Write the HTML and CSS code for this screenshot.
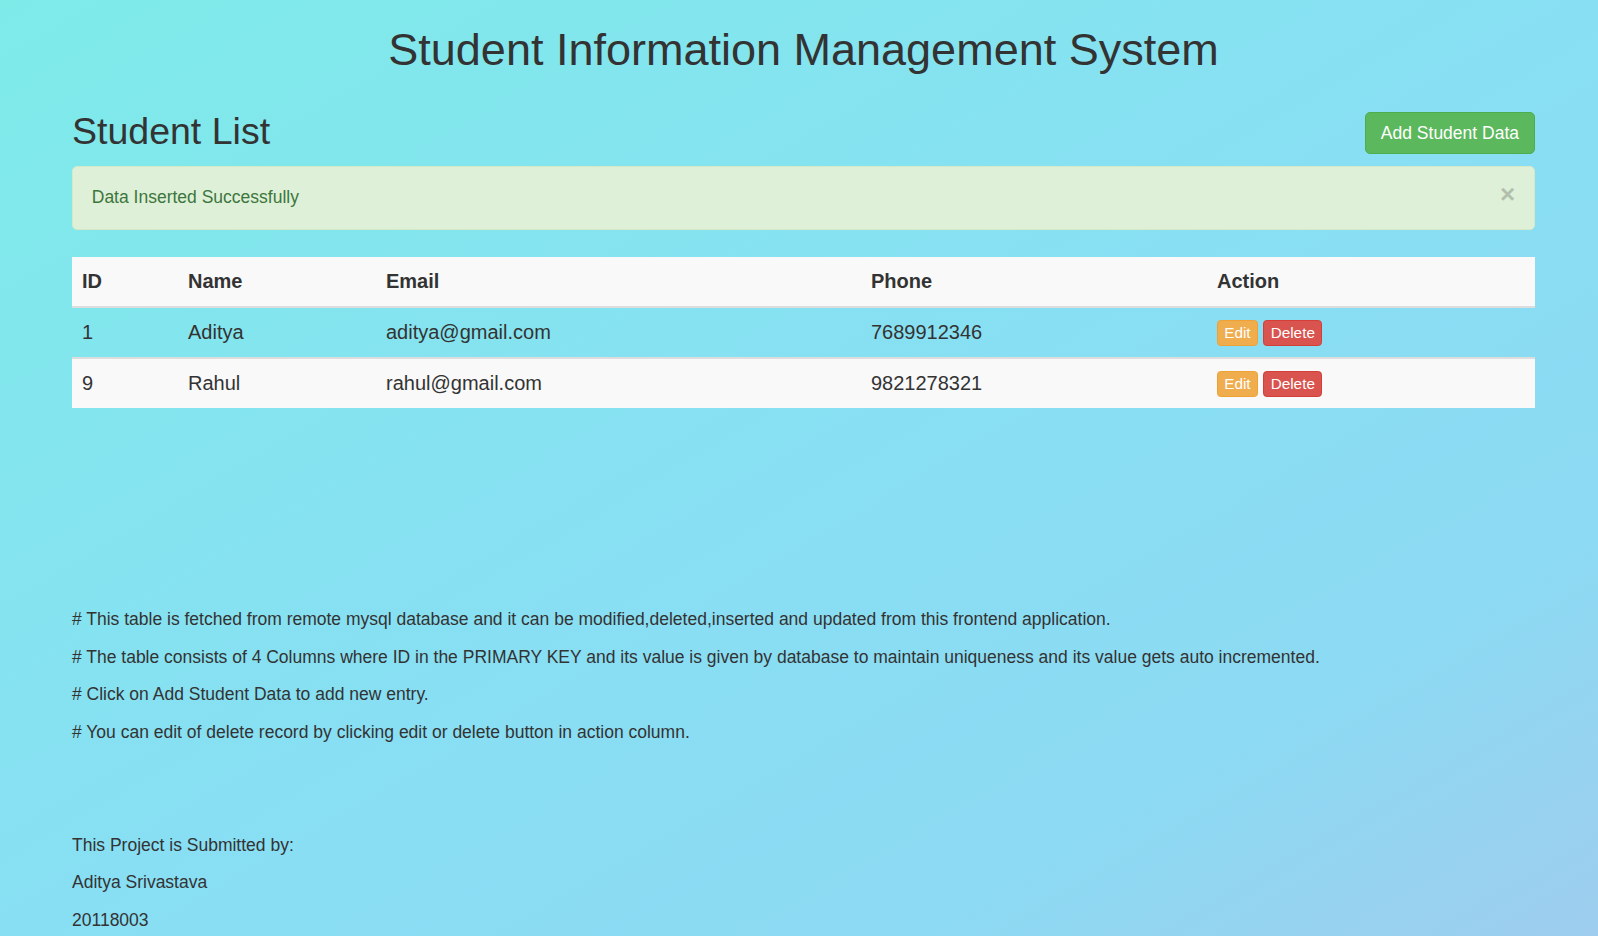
FILE: index.html
```html
<!DOCTYPE html>
<html lang="en">
<head>
<meta charset="utf-8">
<title>Student Information Management System</title>
<link rel="stylesheet" href="styles.css">
</head>
<body>
<div class="container">
  <h1 class="title">Student Information Management System</h1>

  <div class="list-head">
    <h2 class="list-title">Student List</h2>
    <a class="btn btn-success" href="#">Add Student Data</a>
  </div>

  <div class="alert alert-success">
    <span>Data Inserted Successfully</span>
    <span class="close">&times;</span>
  </div>

  <table class="students">
    <thead>
      <tr>
        <th class="col-id">ID</th>
        <th class="col-name">Name</th>
        <th class="col-email">Email</th>
        <th class="col-phone">Phone</th>
        <th class="col-action">Action</th>
      </tr>
    </thead>
    <tbody>
      <tr class="row-plain">
        <td>1</td>
        <td>Aditya</td>
        <td>aditya@gmail.com</td>
        <td>7689912346</td>
        <td><a class="btn-xs btn-warning" href="#">Edit</a> <a class="btn-xs btn-danger" href="#">Delete</a></td>
      </tr>
      <tr class="row-striped">
        <td>9</td>
        <td>Rahul</td>
        <td>rahul@gmail.com</td>
        <td>9821278321</td>
        <td><a class="btn-xs btn-warning" href="#">Edit</a> <a class="btn-xs btn-danger" href="#">Delete</a></td>
      </tr>
    </tbody>
  </table>

  <div class="notes">
    <p># This table is fetched from remote mysql database and it can be modified,deleted,inserted and updated from this frontend application.</p>
    <p># The table consists of 4 Columns where ID in the PRIMARY KEY and its value is given by database to maintain uniqueness and its value gets auto incremented.</p>
    <p># Click on Add Student Data to add new entry.</p>
    <p># You can edit of delete record by clicking edit or delete button in action column.</p>
  </div>

  <div class="credits">
    <p>This Project is Submitted by:</p>
    <p>Aditya Srivastava</p>
    <p>20118003</p>
  </div>
</div>
</body>
</html>
```

FILE: styles.css
```css
html {
  min-height: 100%;
  background-color: #88e0f1;
  background-image: linear-gradient(to bottom right, #7eebe9 0%, #88dff3 50%, #8cdaf3 78%, #9ecdee 100%);
  background-attachment: fixed;
}

body {
  margin: 0;
  font-family: "Liberation Sans", Arial, Helvetica, sans-serif;
  font-size: 17.5px;
  line-height: 25px;
  color: #333333;
}

.container {
  width: 1463px;
  margin: 0 0 0 72px;
}

.title {
  margin: 25px 0 0;
  font-size: 45px;
  font-weight: 500;
  line-height: 49.5px;
  text-align: center;
  color: #333333;
}

.list-head {
  display: flex;
  justify-content: space-between;
  align-items: flex-start;
  margin-top: 36.5px;
}

.list-title {
  margin: 0;
  font-size: 37.5px;
  font-weight: 500;
  line-height: 41.25px;
}

.btn {
  display: inline-block;
  margin-top: 1px;
  padding: 7.5px 15px;
  font-size: 17.5px;
  line-height: 25px;
  border: 1.25px solid transparent;
  border-radius: 5px;
  text-decoration: none;
  white-space: nowrap;
}

.btn-success {
  color: #ffffff;
  background-color: #5cb85c;
  border-color: #4cae4c;
}

.alert {
  display: flex;
  justify-content: space-between;
  align-items: flex-start;
  margin: 11.5px 0 26.5px;
  padding: 18.75px;
  border: 1px solid #d6e9c6;
  border-radius: 5px;
}

.alert-success {
  color: #3c763d;
  background-color: #dff0d8;
}

.close {
  margin-top: -3px;
  font-size: 26px;
  font-weight: bold;
  line-height: 25px;
  color: #000000;
  opacity: 0.2;
}

.students {
  width: 1463px;
  table-layout: fixed;
  border-collapse: collapse;
  border-spacing: 0;
  font-size: 20px;
  line-height: 29px;
}

.students th,
.students td {
  box-sizing: border-box;
  padding: 10px;
  text-align: left;
  vertical-align: middle;
}

.students thead tr {
  background-color: #f9f9f9;
}

.students th {
  font-weight: bold;
  border-bottom: 2px solid #dddddd;
}

.students td {
  border-top: 2px solid #dddddd;
}

.col-id { width: 106px; }
.col-name { width: 198px; }
.col-email { width: 485px; }
.col-phone { width: 346px; }
.col-action { width: 328px; }

.row-plain {
  background-color: transparent;
}

.row-striped {
  background-color: #f9f9f9;
}

.btn-xs {
  display: inline-block;
  padding: 0.75px 6.25px;
  font-size: 15.3px;
  line-height: 22.5px;
  border: 1.25px solid transparent;
  border-radius: 3.75px;
  text-decoration: none;
  vertical-align: middle;
  color: #ffffff;
}

.btn-warning {
  background-color: #f0ad4e;
  border-color: #eea236;
}

.btn-danger {
  background-color: #d9534f;
  border-color: #d43f3a;
}

.notes {
  margin-top: 199.5px;
}

.notes p,
.credits p {
  margin: 0 0 12.5px;
}

.credits {
  margin-top: 88px;
}
```
